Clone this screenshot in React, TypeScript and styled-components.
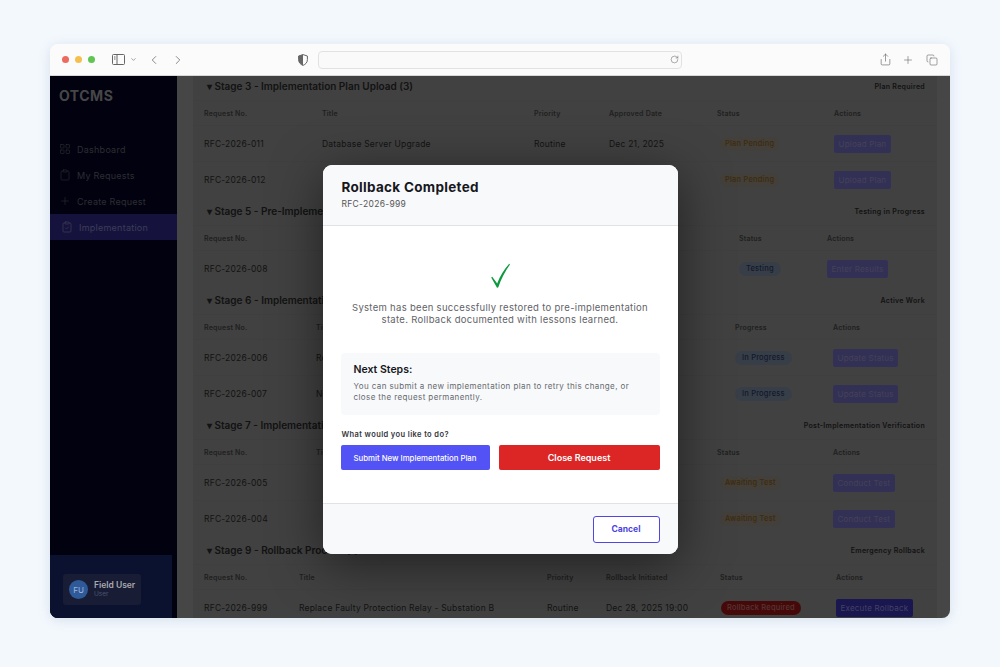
import { ChevronDown, ChevronLeft, ChevronRight, Clipboard, ClipboardCheck, Copy, LayoutGrid, Plus, RotateCw, Share } from "lucide-react";
import type { ReactNode } from "react";
import styled, { createGlobalStyle } from "styled-components";

const GlobalStyle = createGlobalStyle`
  html, body {
    margin: 0;
    padding: 0;
    background: #f3f8fd;
    font-family: "Inter", "Liberation Sans", sans-serif;
  }
  * { box-sizing: border-box; }
`;

const Page = styled.div`
  width: 1000px;
  height: 667px;
  padding: 44px 50px 49px;
  overflow: hidden;
`;

const BrowserWindow = styled.div`
  height: 574px;
  display: flex;
  flex-direction: column;
  border-radius: 8px;
  overflow: hidden;
  box-shadow: 0 2px 12px rgba(120, 140, 170, 0.22);
`;

const Toolbar = styled.header`
  height: 32px;
  flex: none;
  display: flex;
  align-items: center;
  background: #fbfbfb;
  border-bottom: 1px solid #d8d8d8;
  color: #666;
  padding-left: 12px;
`;

const Light = styled.span<{ $color: string }>`
  width: 7px;
  height: 7px;
  border-radius: 50%;
  margin-right: 6px;
  background: ${(props) => props.$color};
`;

const ToolGroup = styled.div<{ $left: number }>`
  display: flex;
  align-items: center;
  margin-left: ${(props) => props.$left}px;
`;

const UrlBar = styled.div`
  width: 364px;
  height: 18px;
  margin-left: 10px;
  display: flex;
  align-items: center;
  justify-content: flex-end;
  padding-right: 2px;
  background: #fafafa;
  border: 1px solid #e2e2e2;
  border-radius: 4px;
`;

const Workspace = styled.div`
  position: relative;
  flex: 1;
  display: flex;
  min-height: 0;
  overflow: hidden;
`;

const Sidebar = styled.aside`
  width: 127px;
  flex: none;
  display: flex;
  flex-direction: column;
  background: #040428;
`;

const Logo = styled.div`
  height: 60px;
  padding: 11px 9px 0;
  font-size: 14px;
  font-weight: 700;
  letter-spacing: 0.5px;
  color: #b0b0b0;
`;

const NavItem = styled.div<{ $active?: boolean }>`
  height: 26px;
  display: flex;
  align-items: center;
  gap: 6px;
  padding-left: ${(props) => (props.$active ? "11px" : "9px")};
  font-size: 9px;
  letter-spacing: 0.25px;
  color: ${(props) => (props.$active ? "#9896d0" : "#6c6f78")};
  background: ${(props) => (props.$active ? "#35309c" : "transparent")};
`;

const UserPanel = styled.div`
  position: relative;
  z-index: 2;
  margin-top: auto;
  margin-right: 5px;
  height: 63px;
  padding: 19px 0 0 13px;
  background: #0a1230;
`;

const UserCard = styled.div`
  width: 78px;
  height: 31px;
  display: flex;
  align-items: center;
  gap: 6px;
  padding-left: 6px;
  background: #181d35;
  border-radius: 3px;
`;

const Avatar = styled.div`
  width: 19px;
  height: 19px;
  border-radius: 50%;
  display: flex;
  align-items: center;
  justify-content: center;
  font-size: 8px;
  color: #9db6d8;
  background: #2f5a9a;
`;

const UserName = styled.div`
  font-size: 8.5px;
  font-weight: 600;
  color: #a8aab0;
  line-height: 10px;
`;

const UserRole = styled.div`
  font-size: 6.5px;
  color: #4c5570;
  line-height: 9px;
`;

const Content = styled.main`
  flex: 1;
  min-width: 0;
  padding: 0 13px 0 16px;
  background: #aeb0b2;
`;

const Card = styled.div`
  margin-top: -4px;
  background: #a2a2a2;
`;

const SectionTitle = styled.div`
  height: 28px;
  display: flex;
  align-items: center;
  justify-content: space-between;
  padding: 0 12px 0 14px;
`;

const StageName = styled.h3`
  margin: 0;
  font-size: 10px;
  font-weight: 600;
  color: #303030;
  white-space: nowrap;
`;

const StageNote = styled.span`
  font-size: 7px;
  font-weight: 600;
  letter-spacing: 0.3px;
  color: #303030;
`;

const Row = styled.div<{ $columns: string; $head?: boolean }>`
  display: grid;
  grid-template-columns: ${(props) => props.$columns};
  align-items: center;
  height: ${(props) => (props.$head ? "25px" : "36px")};
  padding-left: 11px;
  white-space: nowrap;
  border-top: 1px solid #9d9d9d;
  font-size: ${(props) => (props.$head ? "7px" : "8.5px")};
  font-weight: ${(props) => (props.$head ? 600 : 400)};
  letter-spacing: 0.2px;
  color: ${(props) => (props.$head ? "#505050" : "#333333")};
`;

const BADGE_KINDS = {
  warn: { bg: "#a89f92", fg: "#9a6c1c", left: 3, pad: 5 },
  info: { bg: "#8c9cb2", fg: "#2c4074", left: 0, pad: 7 },
  danger: { bg: "#b01818", fg: "#d08484", left: 1, pad: 6 },
};

const Badge = styled.span<{ $kind: keyof typeof BADGE_KINDS }>`
  justify-self: start;
  height: 14px;
  display: inline-flex;
  align-items: center;
  padding: 0 ${(props) => BADGE_KINDS[props.$kind].pad}px;
  border-radius: 7px;
  font-size: 7.5px;
  font-weight: 500;
  background: ${(props) => BADGE_KINDS[props.$kind].bg};
  color: ${(props) => BADGE_KINDS[props.$kind].fg};
  margin-left: ${(props) => BADGE_KINDS[props.$kind].left}px;
`;

const ActionButton = styled.button<{ $strong?: boolean }>`
  justify-self: start;
  height: 18px;
  padding: 0 4.5px;
  border: 0;
  border-radius: 2px;
  font-family: inherit;
  font-size: 8px;
  letter-spacing: 0.2px;
  color: ${(props) => (props.$strong ? "#a8a4ea" : "#a8a4d8")};
  background: ${(props) => (props.$strong ? "#3f38c8" : "#8078d8")};
`;

const Overlay = styled.div`
  position: absolute;
  inset: 0;
  z-index: 1;
  display: flex;
  justify-content: center;
  align-items: flex-start;
  padding-top: 89px;
  background: rgba(0, 0, 0, 0.6);
`;

const Modal = styled.div`
  width: 355px;
  height: 389px;
  display: flex;
  flex-direction: column;
  background: #fff;
  border-radius: 9px;
  overflow: hidden;
  box-shadow: 0 10px 50px rgba(0, 0, 0, 0.5);
`;

const ModalHeader = styled.div`
  height: 61px;
  flex: none;
  padding: 14px 18px 0 19px;
  background: #f8f9fb;
  border-bottom: 1px solid #e0e2e6;
`;

const ModalTitle = styled.h2`
  margin: 0;
  font-size: 13.5px;
  line-height: 17px;
  font-weight: 700;
  letter-spacing: 0.3px;
  color: #16181d;
`;

const ModalRef = styled.div`
  margin-top: 3px;
  font-size: 8.5px;
  line-height: 11px;
  letter-spacing: 0.3px;
  color: #555;
`;

const ModalBody = styled.div`
  flex: 1;
  padding: 37px 18px 0;
`;

const CheckMark = styled.svg`
  display: block;
  width: 24px;
  height: 26px;
  margin: 0 auto 13px;
`;

const Message = styled.p`
  margin: 0 0 27px;
  font-size: 9.5px;
  line-height: 12px;
  letter-spacing: 0.3px;
  text-align: center;
  color: #5f6368;
`;

const NextSteps = styled.div`
  height: 62px;
  padding: 10px 12px 0 13px;
  background: #f8f9fb;
  border-radius: 4px;
`;

const NextTitle = styled.div`
  font-size: 10.5px;
  line-height: 13px;
  font-weight: 600;
  color: #16181d;
  margin-bottom: 5px;
`;

const NextText = styled.p`
  margin: 0;
  font-size: 8px;
  line-height: 10.5px;
  letter-spacing: 0.4px;
  color: #66696e;
`;

const Question = styled.div`
  margin: 15px 0 5px 1px;
  font-size: 7.5px;
  line-height: 10px;
  font-weight: 600;
  letter-spacing: 0.4px;
  color: #33363b;
`;

const Choices = styled.div`
  display: grid;
  grid-template-columns: 149px 1fr;
  gap: 9px;
`;

const ChoiceButton = styled.button<{ $color: string; $bold?: boolean }>`
  height: 25px;
  border: 0;
  border-radius: 2px;
  font-family: inherit;
  font-size: ${(props) => (props.$bold ? "9px" : "7.8px")};
  font-weight: ${(props) => (props.$bold ? 600 : 500)};
  color: #fff;
  background: ${(props) => props.$color};
`;

const ModalFooter = styled.div`
  height: 51px;
  flex: none;
  display: flex;
  align-items: center;
  justify-content: flex-end;
  padding-right: 18px;
  background: #f8f9fb;
  border-top: 1px solid #e0e2e6;
`;

const CancelButton = styled.button`
  width: 67px;
  height: 27px;
  background: #fff;
  border: 1px solid #4f46e5;
  border-radius: 3px;
  font-family: inherit;
  font-size: 8.5px;
  font-weight: 700;
  color: #4a45e0;
`;

type Section = {
  name: string;
  note: string;
  columns: string;
  head: string[];
  rows: string[][];
  badge: keyof typeof BADGE_KINDS;
  action: string;
  strong?: boolean;
};

const SECTIONS: Section[] = [
  {
    name: "Stage 3 - Implementation Plan Upload (3)",
    note: "Plan Required",
    columns: "118px 212px 75px 108px 117px 1fr",
    head: ["Request No.", "Title", "Priority", "Approved Date", "Status", "Actions"],
    rows: [
      ["RFC-2026-011", "Database Server Upgrade", "Routine", "Dec 21, 2025", "Plan Pending"],
      ["RFC-2026-012", "", "Routine", "", "Plan Pending"],
    ],
    badge: "warn",
    action: "Upload Plan",
  },
  {
    name: "Stage 5 - Pre-Implementation Testing (1)",
    note: "Testing in Progress",
    columns: "118px 212px 75px 130px 88px 1fr",
    head: ["Request No.", "", "", "", "Status", "Actions"],
    rows: [["RFC-2026-008", "", "", "", "Testing"]],
    badge: "info",
    action: "Enter Results",
  },
  {
    name: "Stage 6 - Implementation (2)",
    note: "Active Work",
    columns: "112px 218px 75px 126px 98px 1fr",
    head: ["Request No.", "Title", "", "", "Progress", "Actions"],
    rows: [
      ["RFC-2026-006", "Router", "", "", "In Progress"],
      ["RFC-2026-007", "Network", "", "", "In Progress"],
    ],
    badge: "info",
    action: "Update Status",
  },
  {
    name: "Stage 7 - Implementation Testing (2)",
    note: "Post-Implementation Verification",
    columns: "112px 218px 75px 108px 116px 1fr",
    head: ["Request No.", "Title", "", "", "Status", "Actions"],
    rows: [
      ["RFC-2026-005", "", "", "", "Awaiting Test"],
      ["RFC-2026-004", "", "", "", "Awaiting Test"],
    ],
    badge: "warn",
    action: "Conduct Test",
  },
  {
    name: "Stage 9 - Rollback Process (1)",
    note: "Emergency Rollback",
    columns: "95px 248px 59px 114px 116px 1fr",
    head: ["Request No.", "Title", "Priority", "Rollback Initiated", "Status", "Actions"],
    rows: [
      [
        "RFC-2026-999",
        "Replace Faulty Protection Relay - Substation B",
        "Routine",
        "Dec 28, 2025 19:00",
        "Rollback Required",
      ],
    ],
    badge: "danger",
    action: "Execute Rollback",
    strong: true,
  },
];

function StageTable({ section }: { section: Section }) {
  return (
    <section>
      <SectionTitle>
        <StageName>▾ {section.name}</StageName>
        <StageNote>{section.note}</StageNote>
      </SectionTitle>
      <Row $columns={section.columns} $head>
        {section.head.map((label, i) => (
          <span key={i}>{label}</span>
        ))}
      </Row>
      {section.rows.map((row) => (
        <Row key={row[0]} $columns={section.columns}>
          {row.slice(0, 4).map((cell, i) => (
            <span key={i}>{cell}</span>
          ))}
          <Badge $kind={section.badge}>{row[4]}</Badge>
          <ActionButton $strong={section.strong}>{section.action}</ActionButton>
        </Row>
      ))}
    </section>
  );
}

function Nav({ icon, active, children }: { icon: ReactNode; active?: boolean; children: ReactNode }) {
  return (
    <NavItem $active={active}>
      {icon}
      {children}
    </NavItem>
  );
}

export default function App() {
  return (
    <Page>
      <GlobalStyle />
      <BrowserWindow>
        <Toolbar>
          <Light $color="#ec6a5e" />
          <Light $color="#f5bf4f" />
          <Light $color="#61c554" />
          <ToolGroup $left={11}>
            <svg width="13" height="11" viewBox="0 0 13 11" fill="none" stroke="#666" strokeWidth="1">
              <rect x=".5" y=".5" width="12" height="10" rx="1" />
              <path d="M5 .5v10M2 3h1.5M2 5h1.5" />
            </svg>
          </ToolGroup>
          <ToolGroup $left={5}>
            <ChevronDown size={7} strokeWidth={2} />
          </ToolGroup>
          <ToolGroup $left={10}>
            <ChevronLeft size={14} strokeWidth={1.3} />
          </ToolGroup>
          <ToolGroup $left={10}>
            <ChevronRight size={14} strokeWidth={1.3} />
          </ToolGroup>
          <ToolGroup $left={113}>
            <svg width="10" height="12" viewBox="0 0 10 12">
              <path d="M5 .6 9.4 2v3.6c0 2.8-1.8 4.8-4.4 5.8C2.4 10.4.6 8.4.6 5.6V2Z" fill="none" stroke="#666" strokeWidth="1" />
              <path d="M5 .6 .6 2v3.6c0 2.8 1.8 4.8 4.4 5.8Z" fill="#666" />
            </svg>
          </ToolGroup>
          <UrlBar>
            <RotateCw size={9} strokeWidth={1.4} />
          </UrlBar>
          <ToolGroup $left={197}>
            <Share size={13} strokeWidth={1.2} />
          </ToolGroup>
          <ToolGroup $left={10}>
            <Plus size={12} strokeWidth={1.2} />
          </ToolGroup>
          <ToolGroup $left={12}>
            <Copy size={12} strokeWidth={1.2} />
          </ToolGroup>
        </Toolbar>
        <Workspace>
          <Sidebar>
            <Logo>OTCMS</Logo>
            <Nav icon={<LayoutGrid size={12} strokeWidth={1.2} />}>Dashboard</Nav>
            <Nav icon={<Clipboard size={12} strokeWidth={1.2} />}>My Requests</Nav>
            <Nav icon={<Plus size={12} strokeWidth={1.2} />}>Create Request</Nav>
            <Nav active icon={<ClipboardCheck size={12} strokeWidth={1.4} />}>
              Implementation
            </Nav>
            <UserPanel>
              <UserCard>
                <Avatar>FU</Avatar>
                <div>
                  <UserName>Field User</UserName>
                  <UserRole>User</UserRole>
                </div>
              </UserCard>
            </UserPanel>
          </Sidebar>
          <Content>
            <Card>
              {SECTIONS.map((section) => (
                <StageTable key={section.name} section={section} />
              ))}
            </Card>
          </Content>
          <Overlay>
            <Modal>
              <ModalHeader>
                <ModalTitle>Rollback Completed</ModalTitle>
                <ModalRef>RFC-2026-999</ModalRef>
              </ModalHeader>
              <ModalBody>
                <CheckMark viewBox="0 0 24 26">
                  <path d="M3.2 14.6 4.2 13.8 9.2 20.4C12 13.4 16 6.4 21.2 .8L22 1.6C17 8.4 13.4 15.6 10.2 24.6L9 24.8Z" fill="#0d9a3e" />
                </CheckMark>
                <Message>
                  System has been successfully restored to pre-implementation
                  <br />
                  state. Rollback documented with lessons learned.
                </Message>
                <NextSteps>
                  <NextTitle>Next Steps:</NextTitle>
                  <NextText>
                    You can submit a new implementation plan to retry this change, or
                    <br />
                    close the request permanently.
                  </NextText>
                </NextSteps>
                <Question>What would you like to do?</Question>
                <Choices>
                  <ChoiceButton $color="#5252f5">Submit New Implementation Plan</ChoiceButton>
                  <ChoiceButton $color="#dc2626" $bold>
                    Close Request
                  </ChoiceButton>
                </Choices>
              </ModalBody>
              <ModalFooter>
                <CancelButton>Cancel</CancelButton>
              </ModalFooter>
            </Modal>
          </Overlay>
        </Workspace>
      </BrowserWindow>
    </Page>
  );
}
